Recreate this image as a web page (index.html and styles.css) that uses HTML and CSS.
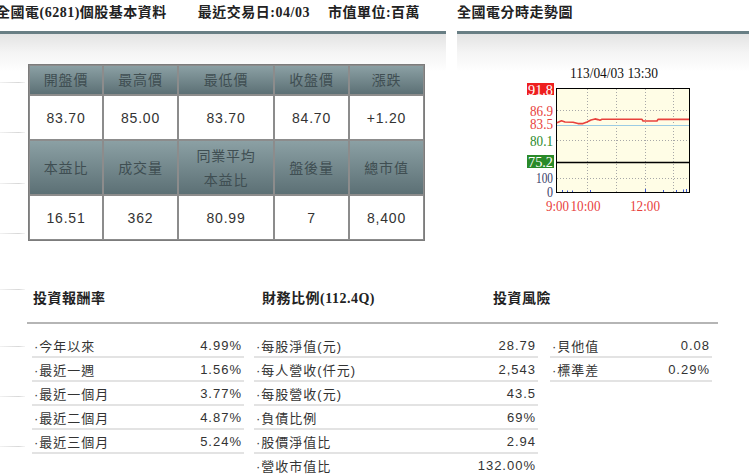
FILE: index.html
```html
<!DOCTYPE html>
<html lang="zh-Hant">
<head>
<meta charset="utf-8">
<title>全國電(6281)個股基本資料</title>
<link rel="stylesheet" href="styles.css">
</head>
<body>
<div class="page">
  <div class="top">
    <section class="panel panel-left">
      <h1 class="ptitle"><span class="t-name">全國電(6281)個股基本資料</span><span class="t-date">最近交易日:04/03</span><span class="t-unit">市值單位:百萬</span></h1>
      <div class="pbody">
        <div class="strip strip-top"><i></i><i></i><i></i><i></i></div>
        <table class="quote">
          <colgroup><col class="c1"><col class="c2"><col class="c3"><col class="c4"><col class="c5"></colgroup>
          <tr class="hd1"><th>開盤價</th><th>最高價</th><th>最低價</th><th>收盤價</th><th>漲跌</th></tr>
          <tr class="dt"><td>83.70</td><td>85.00</td><td>83.70</td><td>84.70</td><td>+1.20</td></tr>
          <tr class="hd2"><th>本益比</th><th>成交量</th><th>同業平均<br>本益比</th><th>盤後量</th><th>總市值</th></tr>
          <tr class="dt"><td>16.51</td><td>362</td><td>80.99</td><td>7</td><td>8,400</td></tr>
        </table>
      </div>
    </section>
    <section class="panel panel-right">
      <h2 class="ptitle">全國電分時走勢圖</h2>
      <div class="pbody chart-body">
        <svg class="chart" width="180" height="150" viewBox="520 64 180 150" xmlns="http://www.w3.org/2000/svg">
          <text x="614" y="78" text-anchor="middle" class="c-title" textLength="88" lengthAdjust="spacingAndGlyphs">113/04/03 13:30</text>
          <rect x="556.5" y="88.5" width="133" height="104" fill="#fffde6" stroke="#000" stroke-width="1"/>
          <g stroke="#a8a8a8" stroke-width="1" stroke-dasharray="1 2">
            <line x1="587.5" y1="89" x2="587.5" y2="192"/>
            <line x1="616.5" y1="89" x2="616.5" y2="192"/>
            <line x1="645.5" y1="89" x2="645.5" y2="192"/>
            <line x1="673.5" y1="89" x2="673.5" y2="192"/>
            <line x1="557" y1="110.5" x2="689" y2="110.5"/>
            <line x1="557" y1="140.5" x2="689" y2="140.5"/>
            <line x1="557" y1="178.5" x2="689" y2="178.5"/>
          </g>
          <line x1="557" y1="125.5" x2="689" y2="125.5" stroke="#9ccbe4" stroke-width="1.2"/>
          <line x1="557" y1="162.5" x2="689" y2="162.5" stroke="#000" stroke-width="1.4"/>
          <polyline fill="none" stroke="#e8413c" stroke-width="1.6" stroke-linejoin="round" points="557,122.7 561.5,120.8 565,122 573,122.3 578,123.6 583,123.6 587,122 591,120 595,118.9 598,119.6 600,120.3 602,119.3 642,119.3 643,121 657,121 658,119.4 689,119.4"/>
          <g stroke="#3a55d0" stroke-width="1">
            <line x1="562.5" y1="190" x2="562.5" y2="192"/>
            <line x1="567.5" y1="190.5" x2="567.5" y2="192"/>
            <line x1="572.5" y1="190.5" x2="572.5" y2="192"/>
            <line x1="590.5" y1="190" x2="590.5" y2="192"/>
            <line x1="645.5" y1="189" x2="645.5" y2="192"/>
            <line x1="663.5" y1="190" x2="663.5" y2="192"/>
            <line x1="676.5" y1="190" x2="676.5" y2="192"/>
            <line x1="683.5" y1="189.5" x2="683.5" y2="192"/>
            <line x1="686.5" y1="189" x2="686.5" y2="192"/>
          </g>
          <rect x="527" y="83" width="27" height="12" fill="#ee1f1f"/>
          <text x="528" y="94.5" class="c-lbl" fill="#fff" textLength="25" lengthAdjust="spacingAndGlyphs">91.8</text>
          <text x="530" y="115.5" class="c-lbl" fill="#e8413c" textLength="23" lengthAdjust="spacingAndGlyphs">86.9</text>
          <text x="530" y="129" class="c-lbl" fill="#e8413c" textLength="23" lengthAdjust="spacingAndGlyphs">83.5</text>
          <text x="530" y="145.5" class="c-lbl" fill="#2a8a2a" textLength="23" lengthAdjust="spacingAndGlyphs">80.1</text>
          <rect x="527" y="155" width="27" height="13" fill="#2a8a2a"/>
          <text x="528" y="166.5" class="c-lbl" fill="#fff" textLength="25" lengthAdjust="spacingAndGlyphs">75.2</text>
          <text x="536" y="183" class="c-lbl c-sm" fill="#3a4068" textLength="17" lengthAdjust="spacingAndGlyphs">100</text>
          <text x="547" y="196.5" class="c-lbl c-sm" fill="#3a4068" textLength="6" lengthAdjust="spacingAndGlyphs">0</text>
          <text x="546" y="211" class="c-lbl" fill="#e8413c" textLength="23" lengthAdjust="spacingAndGlyphs">9:00</text>
          <text x="570.5" y="211" class="c-lbl" fill="#e8413c" textLength="30" lengthAdjust="spacingAndGlyphs">10:00</text>
          <text x="630" y="211" class="c-lbl" fill="#e8413c" textLength="30" lengthAdjust="spacingAndGlyphs">12:00</text>
        </svg>
      </div>
    </section>
  </div>
  <div class="bottom">
    <div class="strip strip-bottom"><i></i><i></i><i></i><i></i></div>
    <div class="stats">
      <div class="stat-heads">
        <h3>投資報酬率</h3>
        <h3>財務比例(112.4Q)</h3>
        <h3>投資風險</h3>
      </div>
      <div class="stat-cols">
        <ul class="col col1">
          <li><span>·今年以來</span><span>4.99%</span></li>
          <li><span>·最近一週</span><span>1.56%</span></li>
          <li><span>·最近一個月</span><span>3.77%</span></li>
          <li><span>·最近二個月</span><span>4.87%</span></li>
          <li><span>·最近三個月</span><span>5.24%</span></li>
        </ul>
        <ul class="col col2">
          <li><span>·每股淨值(元)</span><span>28.79</span></li>
          <li><span>·每人營收(仟元)</span><span>2,543</span></li>
          <li><span>·每股營收(元)</span><span>43.5</span></li>
          <li><span>·負債比例</span><span>69%</span></li>
          <li><span>·股價淨值比</span><span>2.94</span></li>
          <li><span>·營收市值比</span><span>132.00%</span></li>
        </ul>
        <ul class="col col3">
          <li><span>·貝他值</span><span>0.08</span></li>
          <li><span>·標準差</span><span>0.29%</span></li>
        </ul>
      </div>
    </div>
  </div>
</div>
</body>
</html>
```

FILE: styles.css
```css
html, body {
  margin: 0;
  padding: 0;
  background: #fff;
}
body {
  width: 749px;
  height: 475px;
  overflow: hidden;
  font-family: "Liberation Sans", "Noto Sans CJK TC", sans-serif;
  color: #333;
}
.page {
  width: 749px;
}
.top {
  display: flex;
  height: 260px;
}
.panel-left {
  width: 446px;
  overflow: hidden;
}
.panel-right {
  width: 292px;
  margin-left: 11px;
}
.ptitle {
  margin: 0;
  height: 31px;
  line-height: 26px;
  border-bottom: 3px solid #687e84;
  font-family: "Liberation Serif", "Noto Sans CJK TC", serif;
  font-weight: bold;
  font-size: 14px;
  letter-spacing: 0.5px;
  color: #222;
  white-space: nowrap;
}
.t-name { margin-left: -4px; }
.t-date { margin-left: 31px; }
.t-unit { margin-left: 18px; }

.pbody {
  height: 226px;
  background: linear-gradient(#e3e3e3, #f4f4f4 18px, #fff 38px);
}
.panel-left .pbody {
  display: flex;
  align-items: flex-start;
}

.strip {
  width: 25px;
  flex: none;
}
.strip i {
  display: block;
  background: linear-gradient(to right, #f2f2f2, #d8d8d8 75%, #f4f4f4) no-repeat left bottom / 100% 1px;
}
.strip-top i:nth-child(1) { height: 49px; }
.strip-top i:nth-child(2) { height: 50px; }
.strip-top i:nth-child(3) { height: 51px; }
.strip-top i:nth-child(4) { height: 50px; }

.quote {
  margin: 30px 0 0 3px;
  width: 395px;
  table-layout: fixed;
  border-collapse: separate;
  border-spacing: 0;
  border: 1px solid #7c7c7c;
  font-size: 14px;
  letter-spacing: 0.8px;
}
.quote .c1 { width: 74px; }
.quote .c2 { width: 75px; }
.quote .c3 { width: 96px; }
.quote .c4 { width: 75px; }
.quote .c5 { width: 75px; }
.quote th, .quote td {
  padding: 0;
  text-align: center;
  border: 1px solid #8c8c8c;
}
.quote th {
  font-weight: normal;
  color: #3f4e52;
  background: linear-gradient(#8ba0a4, #5c7075);
  line-height: 24px;
}
.quote td {
  background: #fff;
  color: #333;
}
.hd1 th { height: 28px; }
.hd2 th { height: 53px; }
.dt td { height: 43px; }

.chart-body {
  padding-top: 30px;
  height: 196px;
}
.chart {
  display: block;
  margin-left: 63px;
}
.c-title {
  font-family: "Liberation Serif", serif;
  font-size: 14px;
  fill: #111;
}
.c-lbl {
  font-family: "Liberation Serif", serif;
  font-size: 15px;
}
.c-sm {
  font-size: 14px;
}

.bottom {
  display: flex;
  height: 215px;
}
.strip-bottom i:nth-child(1) { height: 30px; }
.strip-bottom i:nth-child(2) { height: 57px; }
.strip-bottom i:nth-child(3) { height: 50px; }
.strip-bottom i:nth-child(4) { height: 50px; }

.stats {
  margin-left: 2px;
  width: 691px;
}
.stat-heads {
  display: grid;
  grid-template-columns: 229px 231px 1fr;
  padding: 28px 0 0 6px;
  height: 34px;
  border-bottom: 2px solid #b5b5b5;
}
.stat-heads h3 {
  margin: 0;
  line-height: 22px;
  font-family: "Liberation Serif", "Noto Sans CJK TC", serif;
  font-weight: bold;
  font-size: 14px;
  letter-spacing: 0.5px;
  color: #222;
  white-space: nowrap;
}
.stat-cols {
  display: flex;
  align-items: flex-start;
  padding: 10px 0 0 5px;
}
.col {
  list-style: none;
  margin: 0;
  padding: 0;
  font-size: 13px;
  letter-spacing: 1px;
  color: #333;
}
.col1 { width: 212px; }
.col2 { width: 284px; margin-left: 10px; }
.col3 { width: 162px; margin-left: 12px; }
.col li {
  display: flex;
  justify-content: space-between;
  align-items: center;
  height: 22px;
  padding: 0 2px 0 2px;
  border-bottom: 2px solid #e3e3e3;
  white-space: nowrap;
}
```
